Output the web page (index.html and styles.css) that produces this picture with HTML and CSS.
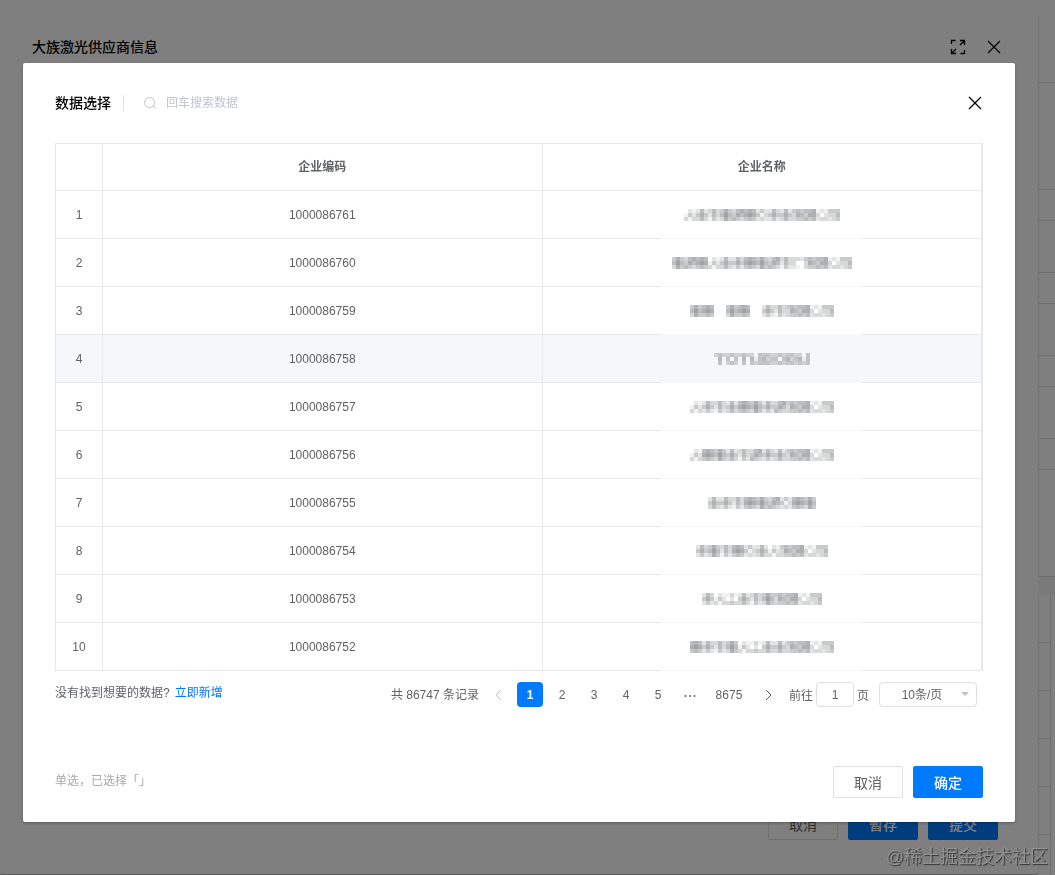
FILE: index.html
```
<!DOCTYPE html>
<html lang="zh-CN">
<head>
  <meta charset="UTF-8">
  <title>数据选择</title>
  <link rel="stylesheet" href="styles.css">
</head>
<body>
  <div class="page">
    <section class="drawer">
      <header class="drawer-head">
        <h1 class="title">大族激光供应商信息</h1>
        <button class="icon-btn" type="button" aria-label="全屏">
          <svg width="16" height="16" viewBox="0 0 16 16"><path d="M1.500 5V1.500H5.500M14.500 11V14.500H10.500M10 1.500H14.500V6M14.500 1.500L10 6M1.500 10V14.500H6M1.500 14.500L6 10"/></svg>
        </button>
        <button class="icon-btn" type="button" aria-label="关闭">
          <svg width="16" height="16" viewBox="0 0 16 16"><path d="M2 2L14 14M14 2L2 14"/></svg>
        </button>
      </header>
      <footer class="drawer-foot">
        <button class="btn" type="button">取消</button>
        <button class="btn primary" type="button">暂存</button>
        <button class="btn primary" type="button">提交</button>
      </footer>
    </section>
    <aside class="sheet">
      <div class="tall"></div>
      <div class="wide"></div>
      <div class="label"></div>
      <div class="field"></div>
      <div class="label"></div>
      <div class="field"></div>
      <div class="label"></div>
      <div class="field"></div>
      <div class="label"></div>
      <div class="wide"></div>
      <div class="bar"></div>
      <div class="cell"></div>
      <div class="cell"></div>
      <div class="cell"></div>
      <div class="cell"></div>
      <div class="cell"></div>
      <div class="cell"></div>
    </aside>
  </div>

  <div class="mask">
    <section class="modal" role="dialog" aria-labelledby="modal-title">
      <header class="modal-head">
        <h2 class="title" id="modal-title">数据选择</h2>
        <label class="search">
          <svg width="14" height="14" viewBox="0 0 14 14"><circle cx="6.500" cy="6.500" r="5"/><path d="M10 10L12.500 12.500"/></svg>
          <input type="text" placeholder="回车搜索数据" aria-label="回车搜索数据">
        </label>
        <button class="icon-btn" type="button" aria-label="关闭">
          <svg width="16" height="16" viewBox="0 0 16 16"><path d="M2 2L14 14M14 2L2 14"/></svg>
        </button>
      </header>

      <div class="modal-body">
        <table class="list">
          <thead>
            <tr>
              <th class="idx"></th>
              <th>企业编码</th>
              <th>企业名称</th>
            </tr>
          </thead>
          <tbody id="tbody"></tbody>
        </table>

        <div class="under">
          <p class="hint">没有找到想要的数据?<a href="#">立即新增</a></p>
          <nav class="pager">
            <span class="total">共 86747 条记录</span>
            <button class="arrow off" type="button" aria-label="上一页"><svg width="8" height="12" viewBox="0 0 8 12"><path d="M7 1L2 6L7 11"/></svg></button>
            <button class="on" type="button">1</button>
            <button type="button">2</button>
            <button type="button">3</button>
            <button type="button">4</button>
            <button type="button">5</button>
            <button type="button" aria-label="更多"><svg class="dots" width="12" height="4" viewBox="0 0 12 4"><circle cx="1.500" cy="3" r="1"/><circle cx="6" cy="3" r="1"/><circle cx="10.500" cy="3" r="1"/></svg></button>
            <button class="last" type="button">8675</button>
            <button class="arrow" type="button" aria-label="下一页"><svg width="8" height="12" viewBox="0 0 8 12"><path d="M2 1L7 6L2 11"/></svg></button>
            <label class="jump">前往<input type="text" value="1">页</label>
            <span class="size">
              <select aria-label="每页条数">
                <option>10条/页</option>
              </select>
            </span>
          </nav>
        </div>
      </div>

      <footer class="modal-foot">
        <span class="picked">单选，已选择「」</span>
        <button class="btn" type="button">取消</button>
        <button class="btn primary" type="button">确定</button>
      </footer>
    </section>
  </div>
  <div class="watermark">@稀土掘金技术社区</div>

  <script>
    // 编码，打码后的名称（每个字母对应一个 3x3 的色块）
    var rows = [
      ["1000086761", "aebfgkdheYXGS"],
      ["1000086760", "fgkaehkfgbrYXGS"],
      ["1000086759", "fk.fk.hbYXGS"],
      ["1000086758", "tutvwuwv"],
      ["1000086757", "ahbekfhgYXGS"],
      ["1000086756", "akfebgheYXGS"],
      ["1000086755", "ehbkfgdkf"],
      ["1000086754", "hfbkdeaYXGS"],
      ["1000086753", "hacebfYXGS"],
      ["1000086752", "khbfaceeYXGS"]
    ];
    // 色块深浅 0-9
    var blocks = {
      a: "021142313", b: "353253142", c: "131020343", d: "242413232",
      e: "252464353", f: "464575364", g: "356465543", h: "253464242",
      k: "565676454", r: "332300210",
      t: "343050040", u: "343404343", v: "304514434", w: "443534443",
      Y: "454365344", X: "556466545", G: "121302233", S: "444335234",
      ".": "000000000"
    };
    var active = 4, unit = 4, oTbody = document.getElementById("tbody");

    function reRender(){
      var i, htmlStr = "";
      for(i = 0; i < rows.length; i++){
        htmlStr += "<tr" + (i + 1 === active ? ' class="hover"' : "") + ">";
        htmlStr += "<td>" + (i + 1) + "</td><td>" + rows[i][0] + "</td>";
        htmlStr += '<td class="name"><canvas height="12" width="' + rows[i][1].length * unit * 3 + '"></canvas></td></tr>';
      }
      oTbody.innerHTML = htmlStr;
    }

    // 画马赛克
    function mosaic(canvas, codes){
      var ctx = canvas.getContext("2d"), i, j, level;
      for(i = 0; i < codes.length; i++){
        for(j = 0; j < 9; j++){
          level = +blocks[codes[i]][j];
          ctx.fillStyle = "rgba(88,90,92," + level * 0.08 + ")";
          ctx.fillRect((i * 3 + j % 3) * unit, Math.floor(j / 3) * unit, unit, unit);
        }
      }
    }

    reRender();
    var aCanvas = document.getElementsByTagName("canvas");
    for(var n = 0; n < rows.length; n++){
      mosaic(aCanvas[n], rows[n][1]);
    }
  </script>
</body>
</html>
```
FILE: styles.css
```
* {
  box-sizing: border-box;
}
html, body, h1, h2, p {
  margin: 0;
  padding: 0;
}
html, body {
  height: 100%;
}
body, button, input, select {
  font-family: "Liberation Sans", "Noto Sans CJK SC", sans-serif;
  font-size: 12px;
  color: #606266;
}
body {
  background: #fff;
  overflow: hidden;
}
button {
  padding: 0;
  border: 0;
  background: none;
  cursor: pointer;
}
svg {
  display: block;
  fill: none;
  stroke: currentColor;
}
.title {
  font-size: 14px;
  line-height: 20px;
  font-weight: 500;
  color: #000;
}

/* 底层页面 */
.page {
  display: flex;
  height: 100%;
}
.drawer {
  flex: 1;
  display: flex;
  flex-direction: column;
  justify-content: space-between;
  margin: 12px 0 1px;
  border-radius: 2px;
  box-shadow: 0 2px 2px rgba(0, 0, 0, .3);
}
.drawer-head {
  display: flex;
  align-items: center;
  gap: 20px;
  height: 70px;
  padding: 0 36px 0 32px;
}
.drawer-head .title {
  flex: 1;
}
.icon-btn {
  color: #000;
}
.icon-btn path {
  stroke-width: 1.3;
}
.drawer-foot {
  display: flex;
  justify-content: flex-end;
  gap: 10px;
  padding: 0 40px 34px;
}
.sheet {
  width: 17px;
}
.sheet div {
  border-bottom: 1px solid #dcdcdc;
}
.sheet .tall {
  height: 83px;
}
.sheet .wide {
  height: 107px;
}
.sheet .label {
  height: 31px;
}
.sheet .field {
  height: 52px;
}
.sheet .bar {
  height: 18px;
  background: #f4f4f4;
  border-bottom: 0;
}
.sheet .cell {
  height: 48px;
  margin-right: 4px;
  border-right: 1px solid #dcdcdc;
}

.btn {
  width: 70px;
  height: 32px;
  border: 1px solid #dcdfe6;
  border-radius: 2px;
  background: #fff;
  font-size: 14px;
}
.btn.primary {
  border-color: #007bff;
  background: #007bff;
  color: #fff;
  font-weight: 500;
}

/* 弹窗 */
.mask {
  position: fixed;
  inset: 0;
  display: flex;
  padding: 63px 40px 53px 23px;
  background: rgba(0, 0, 0, .5);
}
.modal {
  flex: 1;
  display: flex;
  flex-direction: column;
  border-radius: 2px;
  background: #fff;
  box-shadow: 0 1px 3px rgba(0, 0, 0, .3);
}
.modal-head {
  display: flex;
  align-items: center;
  height: 80px;
  padding: 0 32px;
}
.search {
  flex: 1;
  display: flex;
  align-items: center;
  gap: 9px;
  height: 16px;
  margin-left: 12px;
  padding-left: 19px;
  border-left: 1px solid #dcdfe6;
  color: #c0c4cc;
}
.search input {
  width: 160px;
  padding: 0;
  border: 0;
  outline: 0;
}
.search input::placeholder {
  color: #c0c4cc;
}
.modal-body {
  padding: 0 32px;
}

.list {
  width: 100%;
  table-layout: fixed;
  border: 1px solid #e6e8eb;
  border-bottom: 0;
  border-spacing: 0;
}
.list th, .list td {
  height: 48px;
  padding: 0;
  border-right: 1px solid #e6e8eb;
  border-bottom: 1px solid #e6e8eb;
  text-align: center;
}
.list th {
  height: 47px;
  line-height: 16px;
  font-weight: 700;
}
.list .idx {
  width: 47px;
}
.list .hover {
  background: #f5f7fa;
}
/* 打码区域盖住了部分分隔线 */
.list .name {
  border-bottom: 0;
  background: linear-gradient(#f8f8f8, #f8f8f8) center bottom / 200px 1px no-repeat, linear-gradient(#e6e8eb, #e6e8eb) bottom / 100% 1px no-repeat;
}
.list canvas {
  display: block;
  margin: 0 auto;
}

.under {
  display: flex;
  justify-content: space-between;
  padding: 11px 6px 0 0;
}
.hint {
  line-height: 22px;
}
.hint a {
  margin-left: 5px;
  color: #007bff;
  text-decoration: none;
}
.pager {
  display: flex;
  align-items: center;
  gap: 6px;
}
.total {
  line-height: 24px;
}
.pager button {
  display: flex;
  align-items: center;
  justify-content: center;
  width: 26px;
  height: 25px;
  border-radius: 4px;
}
.pager .on {
  background: #007bff;
  color: #fff;
  font-weight: 700;
}
.pager .off {
  color: #c0c4cc;
}
.pager .last {
  width: 40px;
}
.pager .dots {
  fill: #606266;
  stroke: none;
}
.jump {
  display: flex;
  align-items: center;
  gap: 3px;
  margin-left: 2px;
}
.jump input {
  width: 38px;
  height: 25px;
  padding: 0;
  border: 1px solid #dcdfe6;
  border-radius: 4px;
  text-align: center;
}
.size {
  position: relative;
  margin-left: 4px;
}
.size select {
  display: block;
  width: 98px;
  height: 25px;
  padding: 0 12px 0 0;
  border: 1px solid #dcdfe6;
  border-radius: 4px;
  background: #fff;
  text-align-last: center;
  appearance: none;
}
.size::after {
  content: "";
  position: absolute;
  top: 10px;
  right: 8px;
  border: 4px solid transparent;
  border-top-color: #c0c4cc;
  border-bottom: 0;
}

.modal-foot {
  display: flex;
  gap: 10px;
  margin-top: auto;
  padding: 0 32px 24px;
}
.picked {
  flex: 1;
  line-height: 30px;
  color: #aaa;
}

.watermark {
  position: fixed;
  right: 7px;
  bottom: 5px;
  font-size: 18px;
  line-height: 26px;
  color: rgba(150, 150, 150, .9);
  text-shadow: 1px 1px 1px rgba(0, 0, 0, .6);
}
```
